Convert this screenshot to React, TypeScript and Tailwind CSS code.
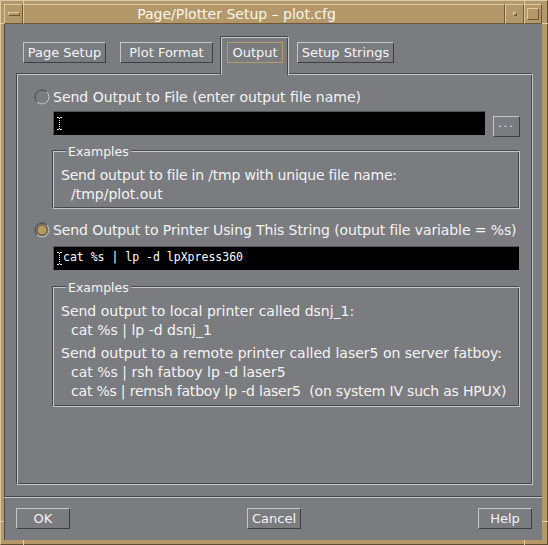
const BEVEL_OUT =
  "border border-t-[#c5c6ca] border-l-[#c5c6ca] border-b-[#3e3f43] border-r-[#3e3f43]";
const ETCHED =
  "border border-t-[#46474b] border-l-[#46474b] border-b-[#c5c6ca] border-r-[#c5c6ca] shadow-[inset_1px_1px_0_#c5c6ca,inset_-1px_-1px_0_#46474b]";
const TAN_BEVEL =
  "border border-t-[#dcc9a3] border-l-[#dcc9a3] border-b-[#6c5838] border-r-[#6c5838]";

function Radio({ on }: { on?: boolean }) {
  return (
    <svg width="16" height="16" viewBox="0 0 16 16" className="shrink-0">
      <path d="M3.05 12.95 A7 7 0 0 1 12.95 3.05" stroke="#45464a" fill="none" />
      <path d="M12.95 3.05 A7 7 0 0 1 3.05 12.95" stroke="#c6c7cb" fill="none" />
      {on && <circle cx="8" cy="8" r="5" fill="#b8995f" stroke="#6a5535" />}
    </svg>
  );
}

function IBeam() {
  return (
    <svg width="5" height="13" viewBox="0 0 5 13" className="shrink-0">
      <path d="M0 0.5h2M3 0.5h2M0 12.5h2M3 12.5h2" stroke="#e8e8e8" />
      <path d="M2.5 1v11" stroke="#e8e8e8" strokeDasharray="1 1" />
    </svg>
  );
}

function Group({ h, children }: { h: string; children: React.ReactNode }) {
  return (
    <div className={`relative ml-[18px] w-[468px] ${h} ${ETCHED} pl-[8px] pt-[15px]`}>
      <span className="absolute -top-[7px] left-[13px] bg-[#7b7c80] px-[2px] text-[12.5px] leading-[16px]">
        Examples
      </span>
      {children}
    </div>
  );
}

function Tick({ className }: { className: string }) {
  return <span className={`absolute bg-[#e2cfaa] ${className}`} />;
}

export default function App() {
  return (
    <div className="relative w-[548px] h-[545px] overflow-hidden bg-[#b4986a] font-['DejaVu_Sans',sans-serif] text-[14px] text-[#f4f4f4]">
      <div className="absolute inset-0 border border-t-[#dcc9a3] border-l-[#dcc9a3] border-b-[#5e4c30] border-r-[#5e4c30]" />
      <Tick className="left-[23px] top-0 h-[4px] w-px" />
      <Tick className="left-[524px] top-0 h-[4px] w-px" />
      <Tick className="left-[23px] bottom-0 h-[5px] w-px" />
      <Tick className="left-[524px] bottom-0 h-[5px] w-px" />
      <Tick className="left-0 top-[23px] w-[4px] h-px" />
      <Tick className="right-0 top-[23px] w-[6px] h-px" />
      <Tick className="left-0 top-[521px] w-[4px] h-px" />
      <Tick className="right-0 top-[521px] w-[6px] h-px" />

      <div className="relative flex h-full flex-col pt-[4px] pl-[4px] pr-[6px] pb-[5px]">
        {/* title bar */}
        <div className="flex h-[20px] shrink-0">
          <div className={`flex w-[19px] items-center justify-center ${TAN_BEVEL}`}>
            <span className={`h-[4px] w-[12px] ${TAN_BEVEL}`} />
          </div>
          <div
            className={`flex flex-1 items-center justify-center pr-[55px] text-[14px] text-[#fbf6ec] ${TAN_BEVEL}`}
          >
            Page/Plotter Setup – plot.cfg
          </div>
          <div className={`flex w-[19px] items-center justify-center ${TAN_BEVEL}`}>
            <span className={`h-[4px] w-[4px] ${TAN_BEVEL}`} />
          </div>
          <div className={`flex w-[18px] items-center justify-center ${TAN_BEVEL}`}>
            <span className={`h-[12px] w-[12px] ${TAN_BEVEL}`} />
          </div>
        </div>

        {/* client area */}
        <div className="flex flex-1 flex-col bg-[#7b7c80] pt-[12px] shadow-[inset_1px_0_0_#4a4b4f]">
          {/* tabs */}
          <div className="flex h-[37px] items-start pl-[19px] text-[13px]">
            <div className={`mt-[6px] flex h-[21px] w-[83px] items-center justify-center ${BEVEL_OUT}`}>
              Page Setup
            </div>
            <div
              className={`ml-[14px] mt-[6px] flex h-[21px] w-[93px] items-center justify-center ${BEVEL_OUT}`}
            >
              Plot Format
            </div>
            <div className="relative z-10 -mb-[2px] ml-[7px] h-[39px] w-[69px] border border-b-0 border-t-[#46474b] border-l-[#46474b] border-r-[#c5c6ca] bg-[#7b7c80] pl-[6px] pt-[5px] shadow-[inset_1px_1px_0_#c5c6ca,inset_-1px_0_0_#46474b]">
              <div className="flex h-[21px] w-[56px] items-center justify-center border border-[#b99d68]">
                Output
              </div>
            </div>
            <div
              className={`ml-[8px] mt-[6px] flex h-[21px] w-[97px] items-center justify-center ${BEVEL_OUT}`}
            >
              Setup Strings
            </div>
          </div>

          {/* panel */}
          <div className={`ml-[12px] flex h-[412px] w-[517px] flex-col pl-[17px] pt-[15px] ${ETCHED}`}>
            <div className="flex h-[16px] items-center">
              <Radio />
              <span className="ml-[3px] whitespace-nowrap">Send Output to File (enter output file name)</span>
            </div>
            <div className="mt-[6px] flex items-start pl-[19px]">
              <div className="flex h-[24px] w-[432px] items-center border border-t-[#55565a] border-l-[#55565a] border-b-black border-r-black bg-black pl-[3px]">
                <IBeam />
              </div>
              <div
                className={`ml-[8px] mt-[5px] flex h-[21px] w-[27px] items-center justify-center pb-[4px] text-[11px] tracking-[2px] ${BEVEL_OUT}`}
              >
                ...
              </div>
            </div>
            <div className="mt-[13px]">
              <Group h="h-[59px]">
                <div className="whitespace-nowrap leading-[19px] tracking-[-0.2px]">
                  Send output to file in /tmp with unique file name:
                </div>
                <div className="pl-[10px] leading-[19px]">/tmp/plot.out</div>
              </Group>
            </div>

            <div className="mt-[13px] flex h-[16px] items-center">
              <Radio on />
              <span className="ml-[3px] whitespace-nowrap tracking-[-0.1px]">
                Send Output to Printer Using This String (output file variable = %s)
              </span>
            </div>
            <div className="mt-[8px] pl-[19px]">
              <div className="flex h-[24px] w-[466px] items-center border border-t-[#55565a] border-l-[#55565a] border-b-black border-r-black bg-black pl-[3px] font-['DejaVu_Sans_Mono',monospace] text-[11.5px] text-white">
                <IBeam />
                <span className="ml-[1px] whitespace-pre">cat %s | lp -d lpXpress360</span>
              </div>
            </div>
            <div className="mt-[16px]">
              <Group h="h-[121px]">
                <div className="whitespace-nowrap leading-[19px]">
                  Send output to local printer called dsnj_1:
                </div>
                <div className="pl-[10px] leading-[19px]">cat %s | lp -d dsnj_1</div>
                <div className="mt-[4px] whitespace-nowrap leading-[19px]">
                  Send output to a remote printer called laser5 on server fatboy:
                </div>
                <div className="pl-[10px] leading-[19px]">cat %s | rsh fatboy lp -d laser5</div>
                <div className="whitespace-pre pl-[10px] leading-[19px] tracking-[-0.2px]">
                  cat %s | remsh fatboy lp -d laser5  (on system IV such as HPUX)
                </div>
              </Group>
            </div>
          </div>

          {/* separator */}
          <div className="mt-[11px] h-[2px] border-t border-b border-t-[#46474b] border-b-[#c5c6ca]" />

          {/* buttons */}
          <div className="mt-[10px] flex justify-between pl-[12px] pr-[10px] text-[13px]">
            <div className={`flex h-[21px] w-[54px] items-center justify-center ${BEVEL_OUT}`}>OK</div>
            <div className={`flex h-[21px] w-[54px] items-center justify-center ${BEVEL_OUT}`}>Cancel</div>
            <div className={`flex h-[21px] w-[54px] items-center justify-center ${BEVEL_OUT}`}>Help</div>
          </div>
        </div>
      </div>
    </div>
  );
}
